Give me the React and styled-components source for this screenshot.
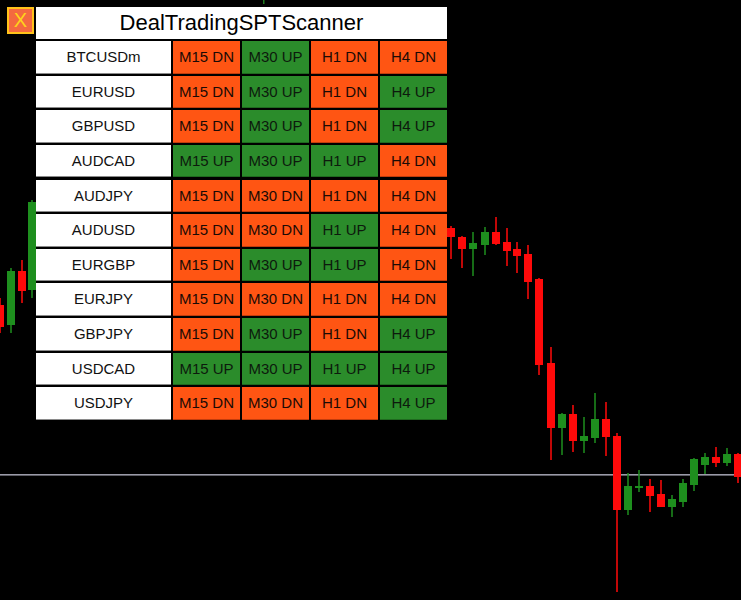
import React from 'react';
import styled, { createGlobalStyle } from 'styled-components';

const GlobalStyle = createGlobalStyle`
  html, body {
    margin: 0;
    padding: 0;
    background: #000;
  }
  body {
    font-family: "Liberation Sans", Arial, sans-serif;
  }
`;

const Screen = styled.div`
  position: relative;
  width: 741px;
  height: 600px;
  overflow: hidden;
  background: #000;
`;

const ChartLayer = styled.svg`
  position: absolute;
  left: 0;
  top: 0;
  width: 741px;
  height: 600px;
`;

const Panel = styled.div`
  position: relative;
  display: flex;
  align-items: flex-start;
  gap: 2px;
  padding: 7px 0 0 7px;
`;

const CloseButton = styled.button`
  width: 27px;
  height: 27px;
  box-sizing: border-box;
  margin: 0;
  padding: 0;
  border: 2px solid #ffc21a;
  background: #f4693f;
  color: #ffd21a;
  font-family: "Liberation Sans", Arial, sans-serif;
  font-size: 20px;
  line-height: 23px;
  text-align: center;
  cursor: pointer;
`;

const Scanner = styled.div`
  display: flex;
  flex-direction: column;
  gap: 2px;
  width: 411px;
`;

const Title = styled.div`
  height: 32px;
  background: #fff;
  color: #000;
  font-size: 22px;
  line-height: 32px;
  text-align: center;
`;

const Grid = styled.div`
  display: grid;
  grid-template-columns: 135px repeat(4, 67px);
  grid-auto-rows: 32.5px;
  column-gap: 2px;
  row-gap: 2.15px;
`;

const Symbol = styled.div`
  background: #fff;
  color: #111;
  font-size: 15px;
  line-height: 32px;
  text-align: center;
  border-bottom: 1px solid #8a8a8a;
`;

const Signal = styled.div`
  background: ${p => (p.$up ? '#2b8c2b' : '#ff5513')};
  color: ${p => (p.$up ? '#0d1a0d' : '#1a0a05')};
  font-size: 15px;
  line-height: 32px;
  text-align: center;
  border-bottom: 1px solid ${p => (p.$up ? '#1f6a1f' : '#c23c0c')};
`;

const frames = ['M15', 'M30', 'H1', 'H4'];

const rows = [
  ['BTCUSDm', 'DN', 'UP', 'DN', 'DN'],
  ['EURUSD', 'DN', 'UP', 'DN', 'UP'],
  ['GBPUSD', 'DN', 'UP', 'DN', 'UP'],
  ['AUDCAD', 'UP', 'UP', 'UP', 'DN'],
  ['AUDJPY', 'DN', 'DN', 'DN', 'DN'],
  ['AUDUSD', 'DN', 'DN', 'UP', 'DN'],
  ['EURGBP', 'DN', 'UP', 'UP', 'DN'],
  ['EURJPY', 'DN', 'DN', 'DN', 'DN'],
  ['GBPJPY', 'DN', 'UP', 'DN', 'UP'],
  ['USDCAD', 'UP', 'UP', 'UP', 'UP'],
  ['USDJPY', 'DN', 'DN', 'DN', 'UP'],
];

// x, bodyTop, bodyBottom, wickTop, wickBottom, up
const candles = [
  [-4, 305, 327, 298, 333, false],
  [7, 271, 325, 268, 333, true],
  [18, 271, 291, 260, 303, false],
  [28, 202, 290, 200, 298, true],
  [447, 228, 237, 226, 259, false],
  [458, 237, 249, 236, 268, false],
  [469, 243, 249, 232, 276, true],
  [481, 232, 245, 227, 255, true],
  [492, 232, 244, 217, 245, false],
  [503, 242, 251, 228, 266, false],
  [513, 249, 256, 242, 273, false],
  [524, 254, 282, 245, 299, false],
  [535, 279, 365, 278, 375, false],
  [547, 363, 428, 347, 460, false],
  [558, 414, 428, 413, 455, true],
  [569, 414, 441, 405, 452, false],
  [580, 436, 441, 417, 453, true],
  [591, 419, 438, 393, 443, true],
  [602, 419, 437, 402, 456, false],
  [613, 436, 510, 433, 592, false],
  [624, 486, 510, 473, 515, true],
  [635, 486, 488, 470, 492, true],
  [646, 486, 496, 479, 512, false],
  [657, 494, 507, 480, 507, false],
  [668, 499, 507, 495, 517, true],
  [679, 483, 502, 479, 507, true],
  [690, 459, 485, 458, 491, true],
  [701, 457, 465, 453, 474, true],
  [712, 457, 463, 447, 467, false],
  [723, 454, 463, 448, 466, true],
  [734, 454, 477, 453, 483, false],
];

function Chart() {
  return (
    <ChartLayer viewBox="0 0 741 600">
      <rect x="263" y="0" width="1.5" height="4" fill="#1f7a1f" />
      <rect x="0" y="474" width="741" height="1.6" fill="#9a9aa8" />
      {candles.map(([x, bt, bb, wt, wb, up], i) => {
        const color = up ? '#1e8f1e' : '#ff0a0a';
        return (
          <g key={i} fill={color}>
            <rect x={x + 3.25} y={wt} width="1.5" height={wb - wt} />
            <rect x={x} y={bt} width="8" height={Math.max(bb - bt, 2)} />
          </g>
        );
      })}
    </ChartLayer>
  );
}

export default function App() {
  return (
    <>
      <GlobalStyle />
      <Screen>
        <Chart />
        <Panel>
          <CloseButton>X</CloseButton>
          <Scanner>
            <Title>DealTradingSPTScanner</Title>
            <Grid>
              {rows.map(([sym, ...sigs]) => (
                <React.Fragment key={sym}>
                  <Symbol>{sym}</Symbol>
                  {sigs.map((s, i) => (
                    <Signal key={i} $up={s === 'UP'}>
                      {frames[i]} {s}
                    </Signal>
                  ))}
                </React.Fragment>
              ))}
            </Grid>
          </Scanner>
        </Panel>
      </Screen>
    </>
  );
}
